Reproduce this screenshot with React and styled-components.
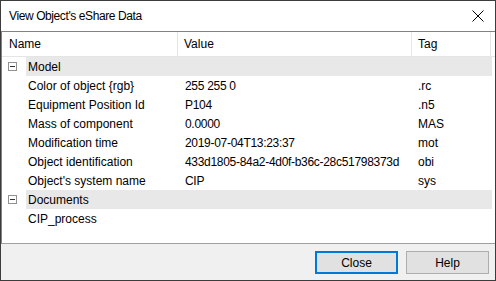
import React from "react";
import styled, { createGlobalStyle } from "styled-components";

const Global = createGlobalStyle`
  html, body { margin: 0; padding: 0; background: #ffffff; }
  * { box-sizing: border-box; }
  body { font-family: "Liberation Sans", Arial, sans-serif; font-size: 12px; color: #000; }
`;

const Window = styled.div`
  width: 496px;
  height: 281px;
  border: 1px solid #3c3c3c;
  background: #ffffff;
  display: flex;
  flex-direction: column;
`;

const TitleBar = styled.div`
  height: 30px;
  display: flex;
  align-items: center;
  justify-content: space-between;
  padding: 0 11px 0 8px;
  background: #ffffff;
`;

const Title = styled.span`
  font-size: 12px;
  letter-spacing: -0.4px;
  color: #000;
`;

const CloseX = styled.svg`
  width: 12px;
  height: 12px;
  display: block;
`;

const ListView = styled.div`
  flex: 1;
  border-top: 1px solid #828282;
  border-left: 1px solid #828282;
  border-bottom: 1px solid #a0a0a0;
  background: #ffffff;
  display: flex;
  flex-direction: column;
`;

const Grid = styled.div`
  display: grid;
  grid-template-columns: 176px 234px 79px;
`;

const Header = styled(Grid)`
  height: 25px;
  border-bottom: 1px solid #e5e5e5;
`;

const HeaderCell = styled.div`
  display: flex;
  align-items: center;
  padding-left: ${(p) => p.$pad}px;
  border-right: 1px solid #e5e5e5;
`;

const Row = styled(Grid)`
  height: 19px;
  align-items: center;
`;

const Cell = styled.div`
  padding-left: ${(p) => p.$pad}px;
  letter-spacing: ${(p) => p.$ls || 0}px;
  white-space: nowrap;
  overflow: visible;
`;

const GroupRow = styled.div`
  height: 19px;
  display: flex;
  align-items: center;
  width: 490px;
`;

const Toggle = styled.div`
  width: 9px;
  height: 9px;
  margin-left: 6px;
  margin-right: 9px;
  border: 1px solid #919191;
  position: relative;
  flex: none;
  &::after {
    content: "";
    position: absolute;
    left: 1px;
    right: 1px;
    top: 3px;
    height: 1px;
    background: #333;
  }
`;

const GroupBand = styled.div`
  flex: 1;
  height: 19px;
  background: #e8e8e8;
  display: flex;
  align-items: center;
  padding-left: 2px;
`;

const Footer = styled.div`
  height: 36px;
  background: #f0f0f0;
  display: flex;
  justify-content: flex-end;
  align-items: flex-start;
  padding: 7px 6px 0 0;
  gap: 8px;
`;

const Button = styled.button`
  width: 83px;
  height: 23px;
  font-family: "Liberation Sans", Arial, sans-serif;
  font-size: 12px;
  color: #000;
  background: #e1e1e1;
  border: ${(p) => (p.$default ? "2px solid #0078d7" : "1px solid #adadad")};
  padding: 0;
  display: flex;
  align-items: center;
  justify-content: center;
`;

const groups = [
  {
    name: "Model",
    items: [
      ["Color of object {rgb}", "255 255 0", ".rc"],
      ["Equipment Position Id", "P104", ".n5"],
      ["Mass of component", "0.0000", "MAS"],
      ["Modification time", "2019-07-04T13:23:37", "mot"],
      ["Object identification", "433d1805-84a2-4d0f-b36c-28c51798373d", "obi"],
      ["Object's system name", "CIP", "sys"],
    ],
  },
  { name: "Documents", items: [["CIP_process", "", ""]] },
];

export default function App() {
  return (
    <>
      <Global />
      <Window>
        <TitleBar>
          <Title>View Object's eShare Data</Title>
          <CloseX viewBox="0 0 12 12">
            <path d="M0.5 0.5 L11.5 11.5 M11.5 0.5 L0.5 11.5" stroke="#000" strokeWidth="1" fill="none" />
          </CloseX>
        </TitleBar>
        <ListView>
          <Header>
            <HeaderCell $pad={7}>Name</HeaderCell>
            <HeaderCell $pad={6}>Value</HeaderCell>
            <HeaderCell $pad={6}>Tag</HeaderCell>
          </Header>
          {groups.map((g) => (
            <React.Fragment key={g.name}>
              <GroupRow>
                <Toggle />
                <GroupBand>{g.name}</GroupBand>
              </GroupRow>
              {g.items.map(([n, v, t]) => (
                <Row key={n}>
                  <Cell $pad={26}>{n}</Cell>
                  <Cell $pad={7} $ls={-0.3}>{v}</Cell>
                  <Cell $pad={6}>{t}</Cell>
                </Row>
              ))}
            </React.Fragment>
          ))}
        </ListView>
        <Footer>
          <Button $default>Close</Button>
          <Button>Help</Button>
        </Footer>
      </Window>
    </>
  );
}
